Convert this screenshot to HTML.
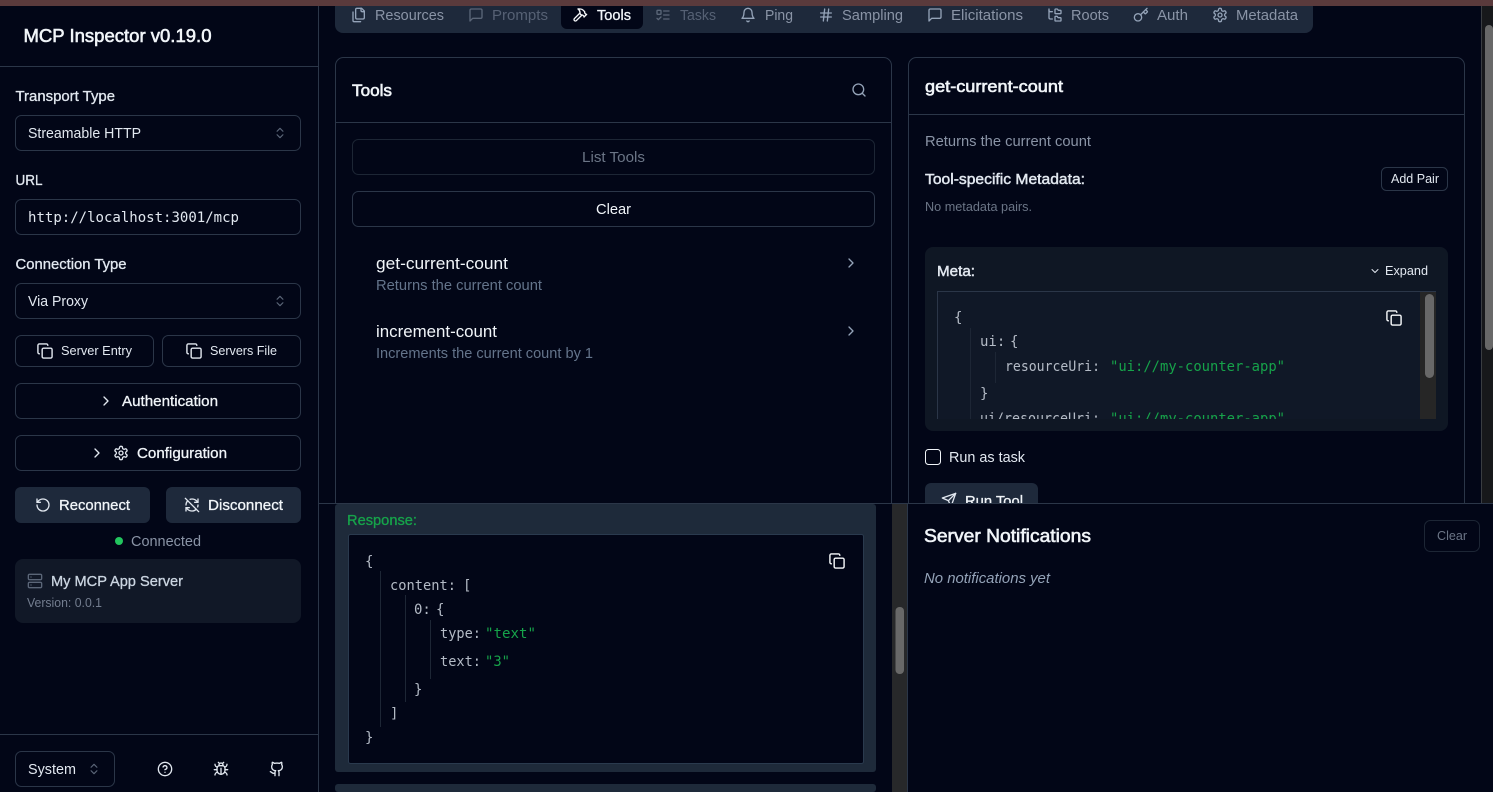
<!DOCTYPE html>
<html lang="en">
<head>
<meta charset="utf-8">
<title>MCP Inspector</title>
<style>
html,body{margin:0;padding:0;width:1493px;height:792px;overflow:hidden;background:#020617}
svg{display:block}
text{font-family:"Liberation Sans",sans-serif;font-size:14.5px;fill:#e2e8f0;color:#e2e8f0;white-space:pre}
.m{stroke:currentColor;stroke-width:.3;paint-order:stroke}
.sb{stroke:currentColor;stroke-width:.6;paint-order:stroke}
.w{fill:#f1f5f9;color:#f1f5f9}
.d{fill:#64748b;color:#64748b}
.g{fill:#8a94a6;color:#8a94a6}
.mono{font-family:"DejaVu Sans Mono","Liberation Mono",monospace;font-size:14px;fill:#b4bbc6}
.str{font-family:"DejaVu Sans Mono","Liberation Mono",monospace;font-size:14px;fill:#16a34a}
.b{fill:none;stroke:#2b3648}
.i{fill:none;stroke:#e2e8f0;stroke-width:2;stroke-linecap:round;stroke-linejoin:round}
.id{stroke:#94a3b8}
.iw{stroke:#f8fafc}
.ig{stroke:#5b6678}
.guide{stroke:#1d2635;stroke-width:1;fill:none}
symbol{overflow:visible}
</style>
</head>
<body>
<svg xmlns="http://www.w3.org/2000/svg" width="1493" height="792" viewBox="0 0 1493 792">
<defs>
<symbol id="copy" viewBox="0 0 24 24"><rect x="8" y="8" width="14" height="14" rx="2"/><path d="M4 16c-1.1 0-2-.9-2-2V4c0-1.1.9-2 2-2h10c1.1 0 2 .9 2 2"/></symbol>
<symbol id="updown" viewBox="0 0 24 24"><path d="m7 15 5 5 5-5"/><path d="m7 9 5-5 5 5"/></symbol>
<symbol id="right" viewBox="0 0 24 24"><path d="m9 18 6-6-6-6"/></symbol>
<symbol id="down" viewBox="0 0 24 24"><path d="m6 9 6 6 6-6"/></symbol>
<symbol id="search" viewBox="0 0 24 24"><circle cx="11" cy="11" r="8"/><path d="m21 21-4.3-4.3"/></symbol>
<symbol id="gear" viewBox="0 0 24 24"><path d="M12.22 2h-.44a2 2 0 0 0-2 2v.18a2 2 0 0 1-1 1.73l-.43.25a2 2 0 0 1-2 0l-.15-.08a2 2 0 0 0-2.73.73l-.22.38a2 2 0 0 0 .73 2.73l.15.1a2 2 0 0 1 1 1.72v.51a2 2 0 0 1-1 1.74l-.15.09a2 2 0 0 0-.73 2.73l.22.38a2 2 0 0 0 2.73.73l.15-.08a2 2 0 0 1 2 0l.43.25a2 2 0 0 1 1 1.73V20a2 2 0 0 0 2 2h.44a2 2 0 0 0 2-2v-.18a2 2 0 0 1 1-1.73l.43-.25a2 2 0 0 1 2 0l.15.08a2 2 0 0 0 2.73-.73l.22-.39a2 2 0 0 0-.73-2.73l-.15-.08a2 2 0 0 1-1-1.74v-.5a2 2 0 0 1 1-1.74l.15-.09a2 2 0 0 0 .73-2.73l-.22-.38a2 2 0 0 0-2.73-.73l-.15.08a2 2 0 0 1-2 0l-.43-.25a2 2 0 0 1-1-1.73V4a2 2 0 0 0-2-2z"/><circle cx="12" cy="12" r="3"/></symbol>
<symbol id="rotate" viewBox="0 0 24 24"><path d="M3 12a9 9 0 1 0 9-9 9.75 9.75 0 0 0-6.74 2.74L3 8"/><path d="M3 3v5h5"/></symbol>
<symbol id="refreshoff" viewBox="0 0 24 24"><path d="M21 8L18.74 5.74A9.75 9.75 0 0 0 12 3C11 3 10.03 3.16 9.13 3.47"/><path d="M8 16H3v5"/><path d="M3 12C3 9.51 4 7.26 5.64 5.64"/><path d="m3 16 2.26 2.26A9.75 9.75 0 0 0 12 21c2.49 0 4.74-1 6.36-2.64"/><path d="M21 12c0 1-.16 1.97-.47 2.87"/><path d="M21 3v5h-5"/><path d="M22 22 2 2"/></symbol>
<symbol id="server" viewBox="0 0 24 24"><rect x="2" y="2" width="20" height="8" rx="2"/><rect x="2" y="14" width="20" height="8" rx="2"/><path d="M6 6h.01"/><path d="M6 18h.01"/></symbol>
<symbol id="help" viewBox="0 0 24 24"><circle cx="12" cy="12" r="10"/><path d="M9.09 9a3 3 0 0 1 5.83 1c0 2-3 3-3 3"/><path d="M12 17h.01"/></symbol>
<symbol id="bug" viewBox="0 0 24 24"><path d="m8 2 1.88 1.88"/><path d="M14.12 3.88 16 2"/><path d="M9 7.13v-1a3.003 3.003 0 1 1 6 0v1"/><path d="M12 20c-3.3 0-6-2.7-6-6v-3a4 4 0 0 1 4-4h4a4 4 0 0 1 4 4v3c0 3.3-2.7 6-6 6"/><path d="M12 20v-9"/><path d="M6.53 9C4.6 8.8 3 7.1 3 5"/><path d="M6 13H2"/><path d="M3 21c0-2.1 1.7-3.9 3.8-4"/><path d="M20.97 5c0 2.1-1.6 3.8-3.5 4"/><path d="M22 13h-4"/><path d="M17.2 17c2.1.1 3.8 1.9 3.8 4"/></symbol>
<symbol id="github" viewBox="0 0 24 24"><path d="M15 22v-4a4.8 4.8 0 0 0-1-3.5c3 0 6-2 6-5.5.08-1.25-.27-2.48-1-3.5.28-1.15.28-2.35 0-3.5 0 0-1 0-3 1.5-2.64-.5-5.36-.5-8 0C6 2 5 2 5 2c-.3 1.15-.3 2.35 0 3.5A5.403 5.403 0 0 0 4 9c0 3.5 3 5.5 6 5.5-.39.49-.68 1.05-.85 1.65-.17.6-.22 1.23-.15 1.85v4"/><path d="M9 18c-4.51 2-5-2-7-2"/></symbol>
<symbol id="files" viewBox="0 0 24 24"><path d="M20 7h-3a2 2 0 0 1-2-2V2"/><path d="M9 18a2 2 0 0 1-2-2V4a2 2 0 0 1 2-2h7l4 4v10a2 2 0 0 1-2 2Z"/><path d="M3 7.6v12.8A1.6 1.6 0 0 0 4.6 22h9.8"/></symbol>
<symbol id="msg" viewBox="0 0 24 24"><path d="M21 15a2 2 0 0 1-2 2H7l-4 4V5a2 2 0 0 1 2-2h14a2 2 0 0 1 2 2z"/></symbol>
<symbol id="hammer" viewBox="0 0 24 24"><path d="m15 12-8.373 8.373a1 1 0 1 1-3-3L12 9"/><path d="m18 15 4-4"/><path d="m21.5 11.5-1.914-1.914A2 2 0 0 1 19 8.172V7l-2.26-2.26a6 6 0 0 0-4.202-1.756L9 2.96l.92.82A6.18 6.18 0 0 1 12 8.4V10l2 2h1.172a2 2 0 0 1 1.414.586L18.5 14.5"/></symbol>
<symbol id="todo" viewBox="0 0 24 24"><rect x="3" y="5" width="6" height="6" rx="1"/><path d="m3 17 2 2 4-4"/><path d="M13 6h8"/><path d="M13 12h8"/><path d="M13 18h8"/></symbol>
<symbol id="bell" viewBox="0 0 24 24"><path d="M6 8a6 6 0 0 1 12 0c0 7 3 9 3 9H3s3-2 3-9"/><path d="M10.3 21a1.94 1.94 0 0 0 3.4 0"/></symbol>
<symbol id="hash" viewBox="0 0 24 24"><path d="M4 9h16"/><path d="M4 15h16"/><path d="M10 3 8 21"/><path d="M16 3l-2 18"/></symbol>
<symbol id="tree" viewBox="0 0 24 24"><path d="M20 10a1 1 0 0 0 1-1V6a1 1 0 0 0-1-1h-2.5a1 1 0 0 1-.8-.4l-.9-1.2A1 1 0 0 0 15 3h-2a1 1 0 0 0-1 1v5a1 1 0 0 0 1 1Z"/><path d="M20 21a1 1 0 0 0 1-1v-3a1 1 0 0 0-1-1h-2.9a1 1 0 0 1-.88-.55l-.42-.85a1 1 0 0 0-.92-.6H13a1 1 0 0 0-1 1v5a1 1 0 0 0 1 1Z"/><path d="M3 5a2 2 0 0 0 2 2h3"/><path d="M3 3v13a2 2 0 0 0 2 2h3"/></symbol>
<symbol id="key" viewBox="0 0 24 24"><path d="m15.5 7.5 2.3 2.3a1 1 0 0 0 1.4 0l2.1-2.1a1 1 0 0 0 0-1.4L19 4"/><path d="m21 2-9.6 9.6"/><circle cx="7.5" cy="15.5" r="5.5"/></symbol>
<symbol id="send" viewBox="0 0 24 24"><path d="m22 2-7 20-4-9-9-4Z"/><path d="M22 2 11 13"/></symbol>
<clipPath id="metaclip"><rect x="938" y="292" width="498" height="127"/></clipPath>
</defs>

<rect width="1493" height="792" fill="#020617"/>

<!-- Sidebar -->
<g>
<rect x="318" y="0" width="1" height="792" fill="#2b3648"/>
<rect x="0" y="66" width="318" height="1" fill="#2b3648"/>
<text x="23.5" y="42" class="w sb" style="font-size:18.5px" textLength="188" lengthAdjust="spacingAndGlyphs">MCP Inspector v0.19.0</text>

<text x="15.5" y="101" class="m" textLength="99.5" lengthAdjust="spacingAndGlyphs">Transport Type</text>
<rect class="b" x="15.5" y="115.5" width="285" height="35" rx="6"/>
<text x="28" y="138" textLength="113" lengthAdjust="spacingAndGlyphs">Streamable HTTP</text>
<use href="#updown" class="i ig" x="273" y="126" width="14" height="14"/>

<text x="15.5" y="185" class="m" textLength="27" lengthAdjust="spacingAndGlyphs">URL</text>
<rect class="b" x="15.5" y="199.5" width="285" height="35" rx="6"/>
<text x="28" y="222" class="mono" style="fill:#e2e8f0" textLength="211" lengthAdjust="spacingAndGlyphs">http://localhost:3001/mcp</text>

<text x="15.5" y="269" class="m" textLength="111" lengthAdjust="spacingAndGlyphs">Connection Type</text>
<rect class="b" x="15.5" y="283.5" width="285" height="35" rx="6"/>
<text x="28" y="306" textLength="60" lengthAdjust="spacingAndGlyphs">Via Proxy</text>
<use href="#updown" class="i ig" x="273" y="294" width="14" height="14"/>

<rect class="b" x="15.5" y="335.5" width="138" height="31" rx="6"/>
<use href="#copy" class="i" x="36.5" y="342.5" width="17" height="17"/>
<text x="61" y="355" style="font-size:12.5px" textLength="71" lengthAdjust="spacingAndGlyphs">Server Entry</text>
<rect class="b" x="162.5" y="335.5" width="138" height="31" rx="6"/>
<use href="#copy" class="i" x="185.5" y="342.5" width="17" height="17"/>
<text x="210" y="355" style="font-size:12.5px" textLength="67" lengthAdjust="spacingAndGlyphs">Servers File</text>

<rect class="b" x="15.5" y="383.5" width="285" height="35" rx="6"/>
<use href="#right" class="i" x="98" y="393" width="16" height="16"/>
<text x="122" y="406" class="m w" textLength="96" lengthAdjust="spacingAndGlyphs">Authentication</text>

<rect class="b" x="15.5" y="435.5" width="285" height="35" rx="6"/>
<use href="#right" class="i" x="89" y="445" width="16" height="16"/>
<use href="#gear" class="i" x="113" y="445" width="16" height="16"/>
<text x="137" y="458" class="m w" textLength="90" lengthAdjust="spacingAndGlyphs">Configuration</text>

<rect x="15" y="487" width="135" height="36" rx="6" fill="#1e293b"/>
<use href="#rotate" class="i" x="35" y="497" width="16" height="16"/>
<text x="59" y="510" class="m w" textLength="71" lengthAdjust="spacingAndGlyphs">Reconnect</text>
<rect x="166" y="487" width="135" height="36" rx="6" fill="#1e293b"/>
<use href="#refreshoff" class="i" x="184" y="497" width="16" height="16"/>
<text x="208" y="510" class="m w" textLength="75" lengthAdjust="spacingAndGlyphs">Disconnect</text>

<circle cx="119" cy="541" r="4" fill="#22c55e"/>
<text x="131" y="546" class="g" textLength="70" lengthAdjust="spacingAndGlyphs">Connected</text>

<rect x="15" y="559" width="286" height="64" rx="8" fill="#111827"/>
<use href="#server" class="i ig" x="27" y="573" width="16" height="16"/>
<text x="51" y="586" class="m" style="fill:#cbd5e1;color:#cbd5e1" textLength="132" lengthAdjust="spacingAndGlyphs">My MCP App Server</text>
<text x="27" y="607" class="g" style="font-size:12.5px;fill:#737d8f" textLength="75" lengthAdjust="spacingAndGlyphs">Version: 0.0.1</text>

<rect x="0" y="734" width="318" height="1" fill="#2b3648"/>
<rect class="b" x="15.5" y="751.5" width="99" height="35" rx="6"/>
<text x="28" y="774" textLength="48" lengthAdjust="spacingAndGlyphs">System</text>
<use href="#updown" class="i ig" x="87" y="762" width="14" height="14"/>
<use href="#help" class="i" x="157" y="761" width="16" height="16"/>
<use href="#bug" class="i" x="213" y="761" width="16" height="16"/>
<use href="#github" class="i" x="269" y="761" width="16" height="16"/>
</g>

<!-- Tab bar -->
<g>
<path d="M335 0h978v25a8 8 0 0 1-8 8H343a8 8 0 0 1-8-8z" fill="#1e293b"/>
<path d="M561 0h82v23a6 6 0 0 1-6 6h-70a6 6 0 0 1-6-6z" fill="#020617"/>
<use href="#files" class="i id" x="351" y="7" width="16" height="16"/>
<text x="375" y="20" class="g" textLength="69" lengthAdjust="spacingAndGlyphs">Resources</text>
<use href="#msg" class="i ig" x="468" y="7" width="16" height="16"/>
<text x="492" y="20" class="d" style="fill:#566174" textLength="56" lengthAdjust="spacingAndGlyphs">Prompts</text>
<use href="#hammer" class="i iw" x="572" y="7" width="16" height="16"/>
<text x="597" y="20" class="w m" textLength="34" lengthAdjust="spacingAndGlyphs">Tools</text>
<use href="#todo" class="i ig" x="655" y="7" width="16" height="16"/>
<text x="680" y="20" class="d" style="fill:#566174" textLength="36" lengthAdjust="spacingAndGlyphs">Tasks</text>
<use href="#bell" class="i id" x="740" y="7" width="16" height="16"/>
<text x="765" y="20" class="g" textLength="28" lengthAdjust="spacingAndGlyphs">Ping</text>
<use href="#hash" class="i id" x="818" y="7" width="16" height="16"/>
<text x="842" y="20" class="g" textLength="61" lengthAdjust="spacingAndGlyphs">Sampling</text>
<use href="#msg" class="i id" x="927" y="7" width="16" height="16"/>
<text x="951" y="20" class="g" textLength="72" lengthAdjust="spacingAndGlyphs">Elicitations</text>
<use href="#tree" class="i id" x="1047" y="7" width="16" height="16"/>
<text x="1071" y="20" class="g" textLength="38" lengthAdjust="spacingAndGlyphs">Roots</text>
<use href="#key" class="i id" x="1133" y="7" width="16" height="16"/>
<text x="1157" y="20" class="g" textLength="31" lengthAdjust="spacingAndGlyphs">Auth</text>
<use href="#gear" class="i id" x="1212" y="7" width="16" height="16"/>
<text x="1236" y="20" class="g" textLength="62" lengthAdjust="spacingAndGlyphs">Metadata</text>
</g>

<!-- Tools panel -->
<g>
<rect class="b" x="335.5" y="57.5" width="556" height="470" rx="8"/>
<rect x="336" y="122" width="555" height="1" fill="#2b3648"/>
<text x="352" y="96" class="w sb" style="font-size:16.5px" textLength="40" lengthAdjust="spacingAndGlyphs">Tools</text>
<use href="#search" class="i id" x="851" y="82" width="16" height="16"/>
<rect x="352.5" y="139.5" width="522" height="35" rx="6" fill="none" stroke="#1d2635"/>
<text x="582" y="162" style="fill:#6b7586" textLength="63" lengthAdjust="spacingAndGlyphs">List Tools</text>
<rect class="b" x="352.5" y="191.5" width="522" height="35" rx="6"/>
<text x="596" y="214" class="w" textLength="35" lengthAdjust="spacingAndGlyphs">Clear</text>
<text x="376" y="269" class="w" style="font-size:16.5px" textLength="132" lengthAdjust="spacingAndGlyphs">get-current-count</text>
<text x="376" y="290" class="d" textLength="166" lengthAdjust="spacingAndGlyphs">Returns the current count</text>
<use href="#right" class="i id" x="843" y="255" width="16" height="16"/>
<text x="376" y="337" class="w" style="font-size:16.5px" textLength="121" lengthAdjust="spacingAndGlyphs">increment-count</text>
<text x="376" y="358" class="d" textLength="217" lengthAdjust="spacingAndGlyphs">Increments the current count by 1</text>
<use href="#right" class="i id" x="843" y="323" width="16" height="16"/>
</g>

<!-- Detail panel -->
<g>
<rect class="b" x="908.5" y="57.5" width="556" height="470" rx="8"/>
<rect x="909" y="114" width="555" height="1" fill="#2b3648"/>
<text x="925" y="92" class="w sb" style="font-size:16.5px" textLength="138" lengthAdjust="spacingAndGlyphs">get-current-count</text>
<text x="925" y="146" class="g" textLength="166" lengthAdjust="spacingAndGlyphs">Returns the current count</text>
<text x="925" y="184" class="sb" style="stroke-width:.45" textLength="160" lengthAdjust="spacingAndGlyphs">Tool-specific Metadata:</text>
<rect class="b" x="1381.5" y="167.5" width="66" height="23" rx="5"/>
<text x="1391" y="183" style="font-size:12.5px" textLength="48" lengthAdjust="spacingAndGlyphs">Add Pair</text>
<text x="925" y="211" style="font-size:12.5px;fill:#6b7586" textLength="107" lengthAdjust="spacingAndGlyphs">No metadata pairs.</text>

<rect x="925" y="247" width="523" height="184" rx="8" fill="#0f1724"/>
<text x="937" y="276" class="sb" style="stroke-width:.45" textLength="38" lengthAdjust="spacingAndGlyphs">Meta:</text>
<use href="#down" class="i" x="1369" y="265" width="12" height="12"/>
<text x="1385" y="275" style="font-size:12.5px" textLength="43" lengthAdjust="spacingAndGlyphs">Expand</text>
<path d="M937.5 419V291.5H1435.5V419" fill="#101827" stroke="#2b3648"/>
<g clip-path="url(#metaclip)">
<rect x="1420" y="292" width="16" height="127" fill="#262626"/>
<rect x="1425" y="294" width="9" height="84" rx="4.5" fill="#686868"/>
<text x="954" y="322" class="mono">{</text>
<path class="guide" d="M970.5 328V430M995.5 352V383"/>
<text x="980" y="346" class="mono">ui:</text>
<text x="1010" y="346" class="mono">{</text>
<text x="1005" y="371" class="mono" textLength="95" lengthAdjust="spacingAndGlyphs">resourceUri:</text>
<text x="1110" y="371" class="str" textLength="175" lengthAdjust="spacingAndGlyphs">"ui://my-counter-app"</text>
<text x="980" y="398" class="mono">}</text>
<text x="980" y="423" class="mono" textLength="120" lengthAdjust="spacingAndGlyphs">ui/resourceUri:</text>
<text x="1110" y="423" class="str" textLength="175" lengthAdjust="spacingAndGlyphs">"ui://my-counter-app"</text>
</g>
<use href="#copy" class="i iw" x="1385.5" y="309.5" width="17" height="17"/>

<rect x="925.5" y="449.5" width="15" height="15" rx="3" fill="none" stroke="#f1f5f9"/>
<text x="949" y="462" textLength="76" lengthAdjust="spacingAndGlyphs">Run as task</text>
<rect x="925" y="483" width="113" height="36" rx="6" fill="#1e293b"/>
<use href="#send" class="i" x="941" y="492" width="16" height="16"/>
<text x="965" y="506" class="m w" textLength="58" lengthAdjust="spacingAndGlyphs">Run Tool</text>
</g>

<!-- Bottom region -->
<g>
<rect x="319" y="503" width="1174" height="289" fill="#020617"/>
<rect x="319" y="503" width="1174" height="1" fill="#2b3648"/>
<rect x="335" y="504" width="541" height="268" rx="3" fill="#1e2a3a"/>
<text x="347" y="525" class="m" style="fill:#16a34a;color:#16a34a" textLength="70" lengthAdjust="spacingAndGlyphs">Response:</text>
<rect x="348.5" y="534.5" width="515" height="229" rx="2" fill="#020617" stroke="#2a3a4e"/>
<path class="guide" d="M380.5 571V727M405.5 595V702M430.5 620V679"/>
<text x="365" y="566" class="mono">{</text>
<text x="390" y="590" class="mono" textLength="66" lengthAdjust="spacingAndGlyphs">content:</text>
<text x="463" y="590" class="mono">[</text>
<text x="414" y="614" class="mono">0:</text>
<text x="436" y="614" class="mono">{</text>
<text x="440" y="638" class="mono" textLength="41" lengthAdjust="spacingAndGlyphs">type:</text>
<text x="485" y="638" class="str" textLength="51" lengthAdjust="spacingAndGlyphs">"text"</text>
<text x="440" y="666" class="mono" textLength="41" lengthAdjust="spacingAndGlyphs">text:</text>
<text x="485" y="666" class="str" textLength="25" lengthAdjust="spacingAndGlyphs">"3"</text>
<text x="414" y="694" class="mono">}</text>
<text x="390" y="718" class="mono">]</text>
<text x="365" y="742" class="mono">}</text>
<use href="#copy" class="i iw" x="828.5" y="552.5" width="17" height="17"/>
<rect x="335" y="784" width="541" height="8" rx="3" fill="#1e2a3a"/>

<rect x="892" y="504" width="15" height="288" fill="#27282a"/>
<rect x="907" y="504" width="1" height="288" fill="#2b3648"/>
<rect x="895.5" y="607" width="8.5" height="67" rx="4" fill="#686868"/>

<text x="924" y="542" class="w sb" style="font-size:18.5px" textLength="167" lengthAdjust="spacingAndGlyphs">Server Notifications</text>
<rect x="1424.5" y="520.5" width="55" height="31" rx="6" fill="none" stroke="#1d2635"/>
<text x="1437" y="540" style="font-size:12.5px;fill:#6b7586" textLength="30" lengthAdjust="spacingAndGlyphs">Clear</text>
<text x="924" y="583" font-style="italic" style="fill:#94a3b8" textLength="126" lengthAdjust="spacingAndGlyphs">No notifications yet</text>
</g>

<!-- Outer scrollbar -->
<rect x="1481" y="6" width="12" height="497" fill="#17181b"/>
<rect x="1481" y="6" width="1" height="497" fill="#3a3d42"/>
<rect x="1485" y="25" width="8" height="325" rx="4" fill="#686868"/>

<!-- Browser top strip -->
<rect x="0" y="0" width="1493" height="6" fill="#5a3a3c"/>
</svg>
</body>
</html>
